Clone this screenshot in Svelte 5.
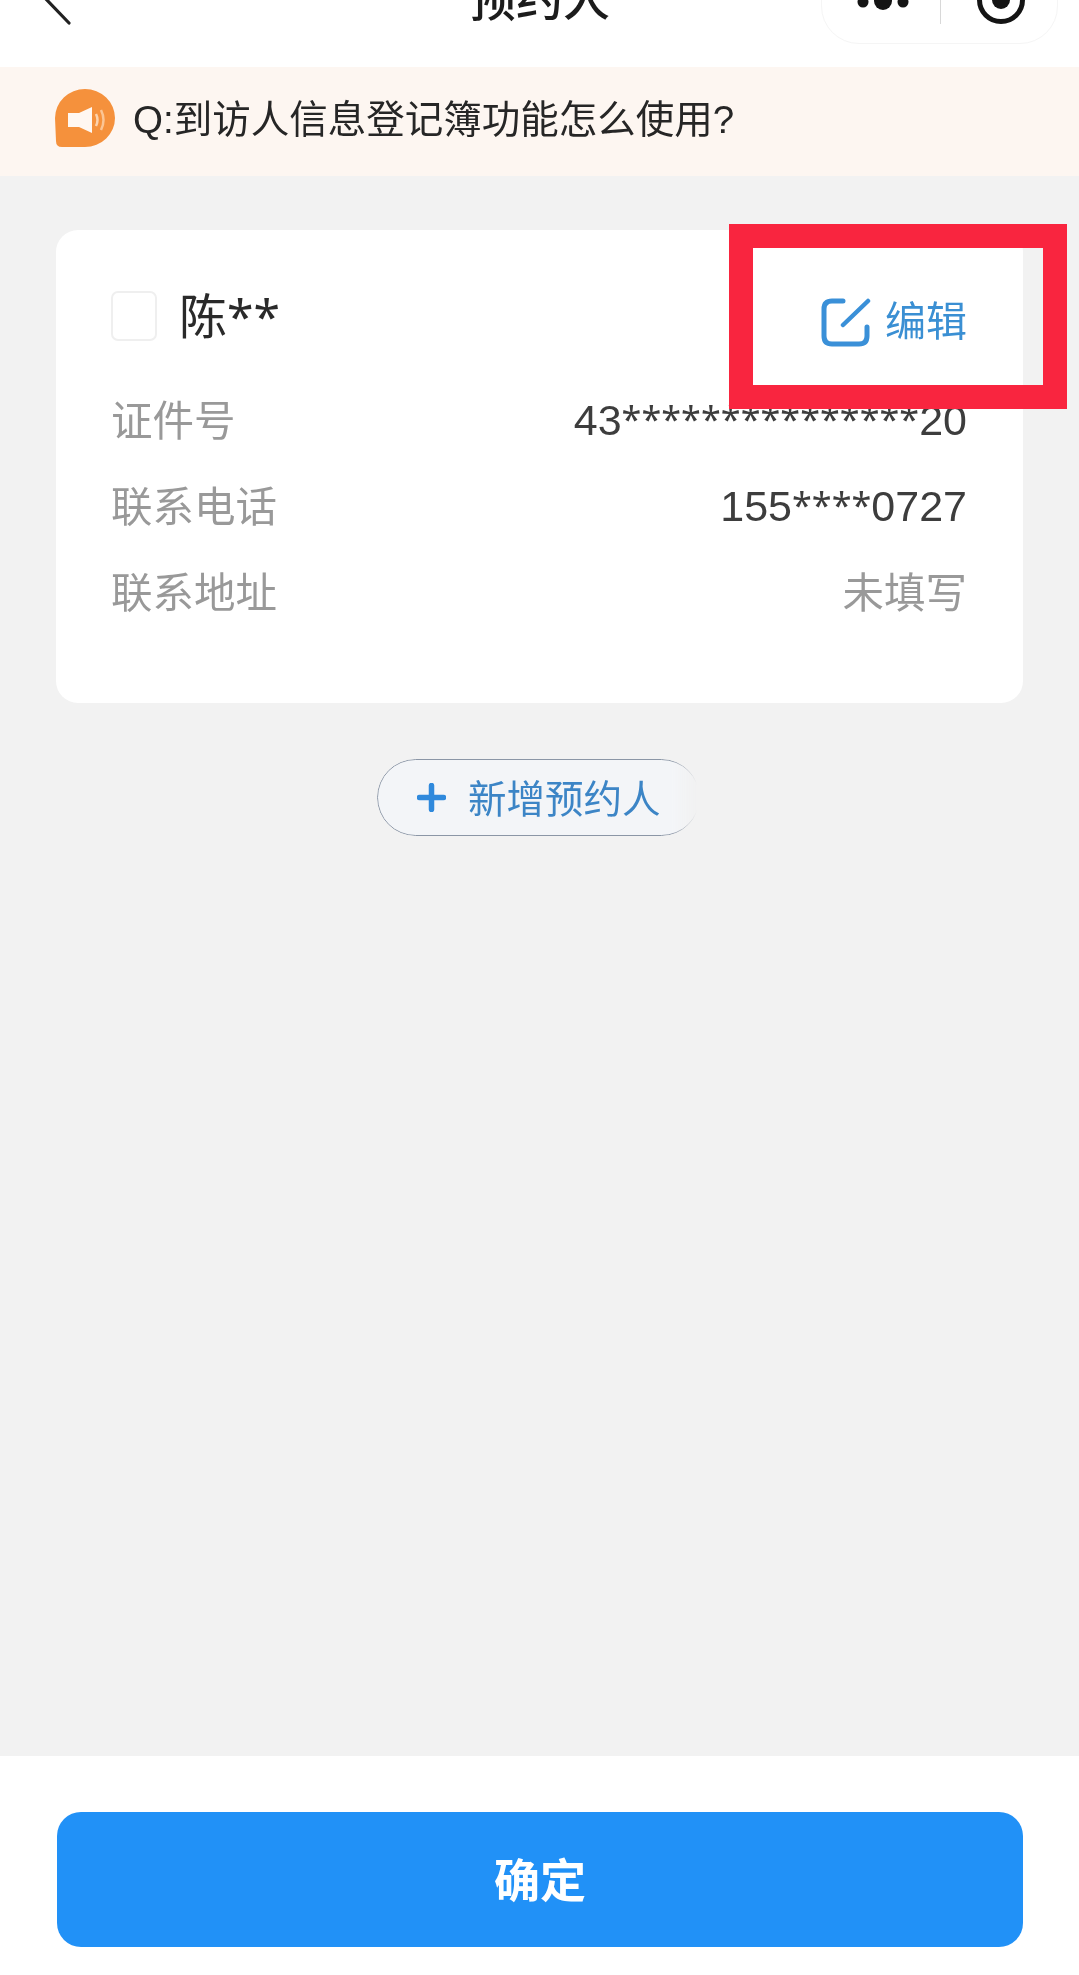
<script>
  const rows = [
    { label: '证件号', head: '43', stars: '***************', tail: '20', tone: 'dark' },
    { label: '联系电话', head: '155', stars: '****', tail: '0727', tone: 'dark' },
    { label: '联系地址', head: '未填写', stars: '', tail: '', tone: 'muted' }
  ];
</script>

<div class="page">
  <header class="nav">
    <svg class="back" width="34" height="67" viewBox="0 0 34 67" fill="none" aria-hidden="true">
      <path d="M4 -3 L29 23" stroke="#222" stroke-width="3.2" stroke-linecap="round" />
    </svg>
    <h1 class="title">预约人</h1>
    <div class="capsule">
      <svg class="capsule-icons" width="236" height="44" viewBox="0 0 236 44" fill="none" aria-hidden="true">
        <circle cx="41" cy="2" r="5.500" fill="#141414" />
        <circle cx="61" cy="1" r="9" fill="#141414" />
        <circle cx="81" cy="2" r="5.500" fill="#141414" />
        <path d="M118.500 0 V24" stroke="#d8d8d8" stroke-width="1" />
        <circle cx="179" cy="0" r="21.500" stroke="#141414" stroke-width="5" />
        <circle cx="179" cy="0" r="9" fill="#141414" />
      </svg>
    </div>
  </header>

  <div class="notice">
    <svg class="speaker" width="61" height="58" viewBox="0 0 61 58" aria-hidden="true">
      <path d="M0 29 A30 29 0 1 1 30 58 L7 58 Q1 58 1 52 Z" fill="#f5913c" />
      <path d="M13 24 H24 L37 18 V44 L24 38 H13 Z" fill="#fff" opacity=".93" />
      <path d="M41 25 Q44 31 41 37" stroke="#fcd3ae" stroke-width="2.500" fill="none" />
      <path d="M46 21 Q51 31 46 41" stroke="#fbc594" stroke-width="2.500" fill="none" />
    </svg>
    <span class="notice-text">Q:到访人信息登记簿功能怎么使用?</span>
  </div>

  <main class="content">
    <section class="card">
      <div class="name-row">
        <div class="person">
          <span class="checkbox"></span>
          <span class="name">陈**</span>
        </div>
        <div class="edit">
          <svg width="50" height="50" viewBox="0 0 50 50" fill="none" aria-hidden="true">
            <path d="M22 3 H11 Q3 3 3 11 V38 Q3 46 11 46 H38 Q46 46 46 38 V29" stroke="#3a90d8" stroke-width="5" stroke-linecap="round" />
            <path d="M22 27 L47 3" stroke="#3a90d8" stroke-width="4.500" stroke-linecap="round" />
          </svg>
          <span class="edit-text">编辑</span>
        </div>
      </div>
      {#each rows as row}
        <div class="row">
          <span class="label">{row.label}</span>
          <span class="value {row.tone}">{row.head}{#if row.stars}<span class="stars">{row.stars}</span>{/if}{row.tail}</span>
        </div>
      {/each}
      <div class="highlight"></div>
    </section>

    <div class="add-wrap">
      <button class="add" type="button">
        <svg width="29" height="29" viewBox="0 0 29 29" aria-hidden="true">
          <path d="M2.500 14.500 H26.500 M14.500 2.500 V26.500" stroke="#2f89dc" stroke-width="5.500" stroke-linecap="round" />
        </svg>
        <span class="add-text">新增预约人</span>
      </button>
    </div>
  </main>

  <footer class="footer">
    <button class="confirm" type="button">确定</button>
  </footer>
</div>

<style>
  :global(body) {
    margin: 0;
    background: #f2f2f2;
  }

  .page {
    width: 1079px;
    height: 1975px;
    display: flex;
    flex-direction: column;
    background: #f2f2f2;
    font-family: "Liberation Sans", "Noto Sans CJK SC", sans-serif;
    overflow: hidden;
    filter: blur(0.4px);
  }

  .nav {
    position: relative;
    height: 67px;
    flex: none;
    background: #fff;
    overflow: hidden;
  }

  .back {
    position: absolute;
    left: 40px;
    top: 0;
  }

  .title {
    margin: 0;
    height: 67px;
    padding-bottom: 44px;
    box-sizing: border-box;
    display: flex;
    align-items: flex-end;
    justify-content: center;
    font-size: 47px;
    line-height: 46px;
    font-weight: 500;
    color: #1c1c1c;
    white-space: nowrap;
  }

  .capsule {
    position: absolute;
    left: 821px;
    top: -44px;
    width: 237px;
    height: 88px;
    box-sizing: border-box;
    border: 1px solid #f5f5f5;
    border-radius: 38px;
    background: #fff;
  }

  .capsule-icons {
    position: absolute;
    left: 0;
    top: 43px;
    overflow: visible;
  }

  .notice {
    height: 109px;
    flex: none;
    box-sizing: border-box;
    padding-left: 55px;
    display: flex;
    align-items: center;
    gap: 17px;
    background: #fdf6f1;
  }

  .speaker {
    flex: none;
    margin-bottom: 7px;
  }

  .notice-text {
    font-size: 38.500px;
    line-height: 50px;
    color: #262626;
    white-space: nowrap;
    padding-bottom: 3px;
  }

  .content {
    flex: 1;
    padding: 54px 56px 0;
  }

  .card {
    position: relative;
    height: 473px;
    box-sizing: border-box;
    padding: 61px 56px 0 55px;
    border-radius: 22px;
    background: #fff;
  }

  .name-row {
    height: 86px;
    display: flex;
    justify-content: space-between;
    align-items: flex-start;
  }

  .person {
    display: flex;
    align-items: center;
    gap: 22px;
  }

  .checkbox {
    width: 46px;
    height: 50px;
    box-sizing: border-box;
    border: 2px solid #efefef;
    border-radius: 7px;
    background: #fff;
  }

  .name {
    font-family: "Noto Sans", "Noto Sans CJK SC", sans-serif;
    font-size: 48px;
    line-height: 50px;
    color: #2a2a2a;
  }

  .edit {
    display: flex;
    align-items: center;
    gap: 14px;
    margin-top: 6px;
    font-size: 41px;
    line-height: 50px;
    color: #3a8fd3;
  }

  .edit svg {
    display: block;
  }

  .edit-text {
    padding-bottom: 2px;
  }

  .row {
    height: 86px;
    display: flex;
    justify-content: space-between;
    align-items: center;
    font-size: 41.500px;
  }

  .label {
    color: #999;
    padding-bottom: 4px;
  }

  .value.dark {
    font-size: 43px;
    color: #3d3d3d;
  }

  .value.muted {
    color: #999;
    padding-bottom: 4px;
  }

  .stars {
    font-family: "Noto Sans", sans-serif;
    font-size: 36px;
    vertical-align: 3px;
    line-height: 1;
  }

  .highlight {
    position: absolute;
    left: 673px;
    top: -6px;
    width: 338px;
    height: 185px;
    box-sizing: border-box;
    border: solid #f9253f;
    border-width: 24px;
    pointer-events: none;
  }

  .add-wrap {
    margin-top: 56px;
    padding-left: 321px;
  }

  .add {
    width: 323px;
    height: 77px;
    box-sizing: border-box;
    padding: 0 0 0 39px;
    display: flex;
    align-items: center;
    gap: 22px;
    border: 1.500px solid #8b96a6;
    border-radius: 39px;
    background: #f3f5f8;
    font-family: inherit;
    font-size: 38.500px;
    color: #3c85c6;
    white-space: nowrap;
    -webkit-mask-image: linear-gradient(to right, #000 91%, transparent 99%);
    mask-image: linear-gradient(to right, #000 91%, transparent 99%);
  }

  .add-text {
    padding-bottom: 4px;
  }

  .footer {
    height: 219px;
    flex: none;
    box-sizing: border-box;
    padding: 56px 56px 28px 57px;
    background: #fff;
  }

  .confirm {
    display: block;
    width: 100%;
    height: 135px;
    padding: 0 0 5px;
    border: 0;
    border-radius: 24px;
    background: #2191f7;
    color: #fff;
    font-family: inherit;
    font-size: 46px;
    font-weight: 700;
  }
</style>
